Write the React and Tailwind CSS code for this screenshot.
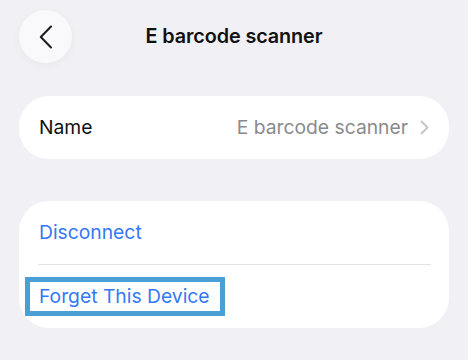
import React from "react";

function BackButton() {
  return (
    <button className="flex h-[53px] w-[53px] items-center justify-center rounded-full bg-[#f9f9fb] shadow-[0_2px_10px_rgba(0,0,0,0.04)]">
      <svg width="14" height="24" viewBox="0 0 14 24" fill="none">
        <path d="M12 1.5 1.8 12 12 22.5" stroke="#1c1c1e" strokeWidth="2" strokeLinecap="round" strokeLinejoin="round" />
      </svg>
    </button>
  );
}

export default function App() {
  return (
    <div
      className="min-h-[360px] w-[468px] bg-[#f1f0f5] px-[19px] pt-[10px]"
      style={{ fontFamily: "Inter, 'Noto Sans', sans-serif" }}
    >
      {/* Header */}
      <div className="relative flex h-[53px] items-center">
        <BackButton />
        <h1 className="absolute left-0 right-0 text-center text-[19.8px] font-semibold tracking-[-0.1px] text-[#111]">
          E barcode scanner
        </h1>
      </div>

      {/* Name card */}
      <div className="mt-[33px] flex h-[63px] items-center rounded-[30px] bg-white pl-[20px] pr-[20px]">
        <span className="text-[19.3px] text-[#111]">Name</span>
        <span className="ml-auto text-[19.3px] text-[#8a8a8e]">E barcode scanner</span>
        <svg className="ml-[12px]" width="9" height="15" viewBox="0 0 9 15" fill="none">
          <path d="M1.5 1.5 7.5 7.5 1.5 13.5" stroke="#c4c4c8" strokeWidth="1.8" strokeLinecap="round" strokeLinejoin="round" />
        </svg>
      </div>

      {/* Actions card */}
      <div className="mt-[42px] flex h-[127px] flex-col rounded-[30px] bg-white">
        <div className="flex h-[63px] items-center pl-[20px]">
          <span className="text-[19.3px] text-[#3478f6]">Disconnect</span>
        </div>
        <div className="ml-[19px] mr-[18px] h-px bg-[#e3e3e6]" />
        <div className="flex flex-1 items-center pl-[6px]">
          <div className="flex h-[39px] w-[200px] items-center border-[5px] border-[#4a9fd4] pl-[9px]">
            <span className="text-[19.3px] text-[#3478f6]">Forget This Device</span>
          </div>
        </div>
      </div>
    </div>
  );
}
